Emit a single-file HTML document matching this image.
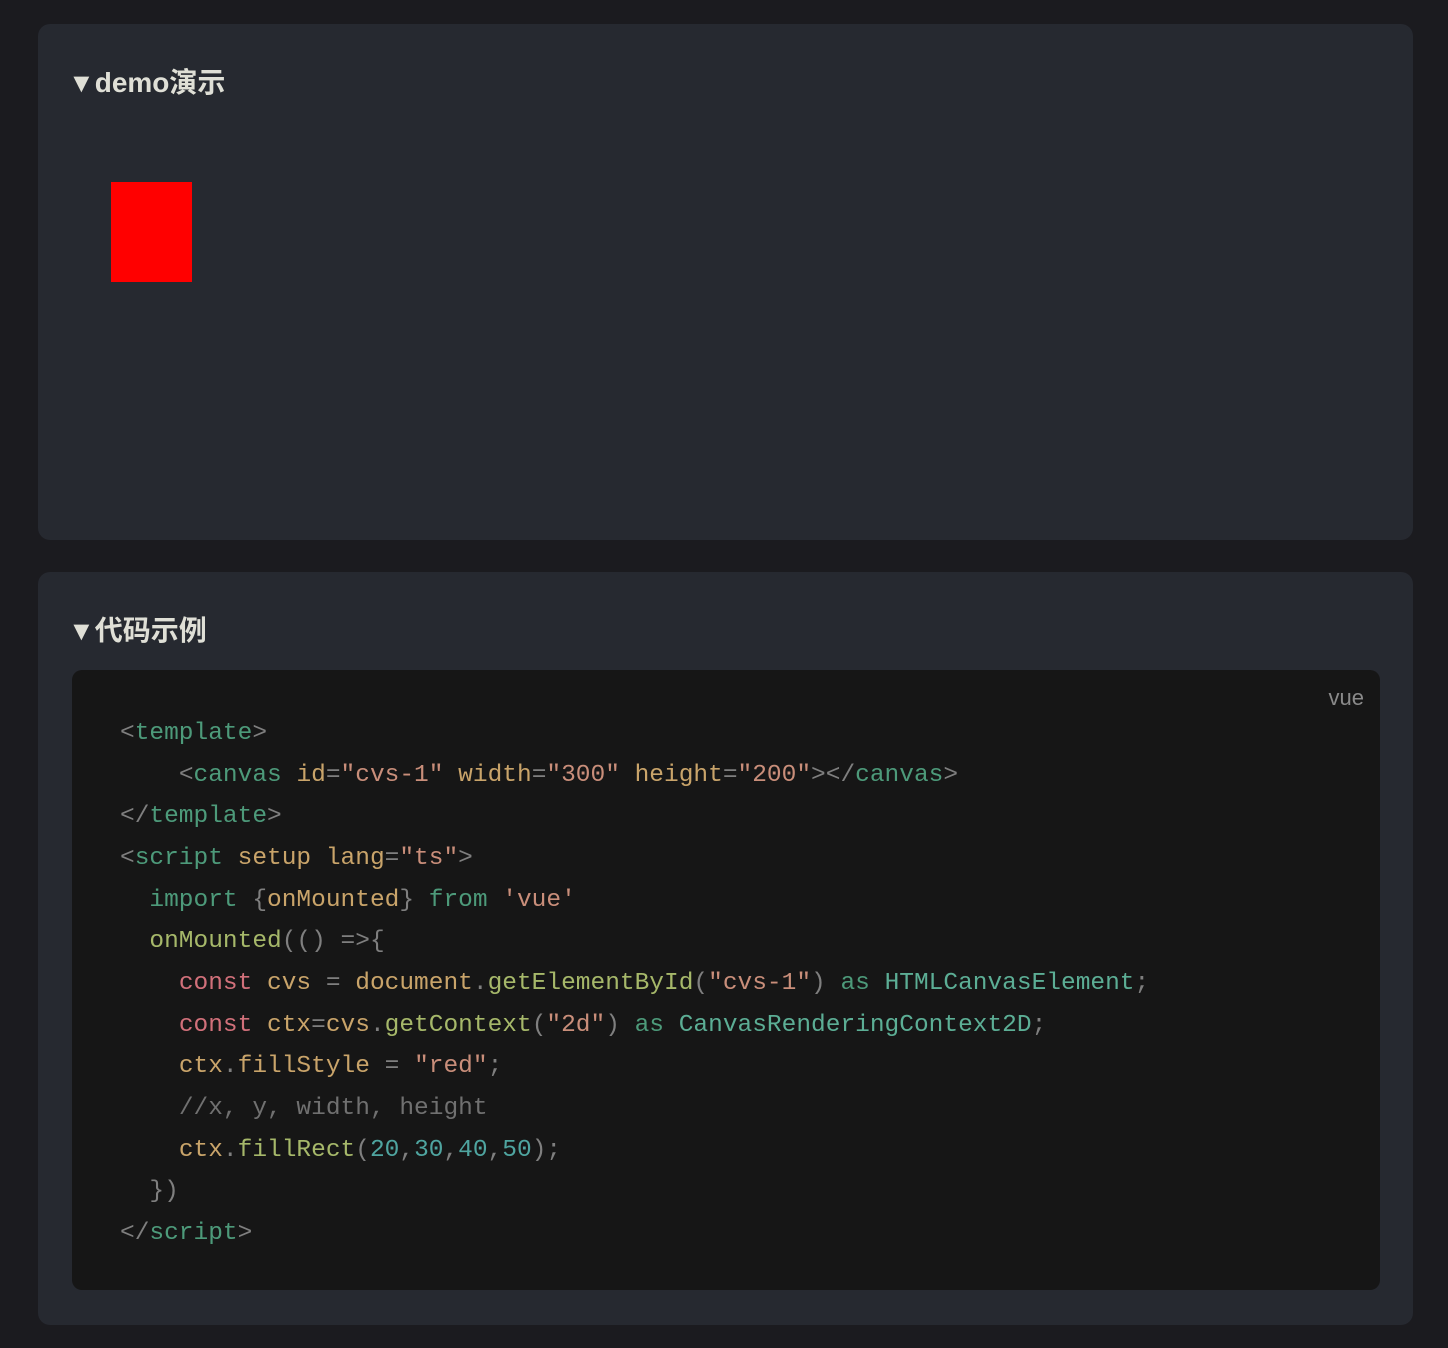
<!DOCTYPE html>
<html><head><meta charset="utf-8"><style>
body{margin:0;background:#1b1b1f;width:1448px;height:1348px;overflow:hidden;font-family:"Liberation Sans","Noto Sans CJK SC",sans-serif;}
.card{position:absolute;left:38px;width:1375px;background:#262930;border-radius:12px;}
.title{position:absolute;left:30px;color:#dfdfd6;font-size:28px;font-weight:bold;}
.code{position:absolute;left:34px;top:98px;width:1308px;height:620px;background:#161616;border-radius:10px;}
pre{margin:0;position:absolute;left:48px;top:43px;font-family:"Liberation Mono","DejaVu Sans Mono",monospace;font-size:24.5px;line-height:41.67px;color:#bdbdbd;}
.g{color:#7f7f7f}.t{color:#4d9a7a}.a{color:#c9a46a}.s{color:#c98e7a}.k{color:#4d9a7a}.f{color:#a6b86a}.c{color:#d1707a}.n{color:#4fa5a0}.cm{color:#707070}.ty{color:#5cae95}
</style></head><body>
<div class="card" style="top:24px;height:516px">
<div class="title" style="top:37px"><span style="font-size:27px">▼</span>demo演示</div>
<div style="position:absolute;left:73px;top:158px;width:81px;height:100px;background:#ff0000"></div>
</div>
<div class="card" style="top:572px;height:753px">
<div class="title" style="top:37px"><span style="font-size:27px">▼</span>代码示例</div>
<div class="code">
<div style="position:absolute;right:16px;top:15px;color:#8a8a8a;font-size:22px">vue</div>
<pre><span class="g">&lt;</span><span class="t">template</span><span class="g">&gt;</span>
    <span class="g">&lt;</span><span class="t">canvas</span> <span class="a">id</span><span class="g">=</span><span class="s">"cvs-1"</span> <span class="a">width</span><span class="g">=</span><span class="s">"300"</span> <span class="a">height</span><span class="g">=</span><span class="s">"200"</span><span class="g">&gt;&lt;/</span><span class="t">canvas</span><span class="g">&gt;</span>
<span class="g">&lt;/</span><span class="t">template</span><span class="g">&gt;</span>
<span class="g">&lt;</span><span class="t">script</span> <span class="a">setup</span> <span class="a">lang</span><span class="g">=</span><span class="s">"ts"</span><span class="g">&gt;</span>
  <span class="k">import</span> <span class="g">{</span><span class="a">onMounted</span><span class="g">}</span> <span class="k">from</span> <span class="s">'vue'</span>
  <span class="f">onMounted</span><span class="g">(() =&gt;{</span>
    <span class="c">const</span> <span class="a">cvs</span> <span class="g">=</span> <span class="a">document</span><span class="g">.</span><span class="f">getElementById</span><span class="g">(</span><span class="s">"cvs-1"</span><span class="g">)</span> <span class="k">as</span> <span class="ty">HTMLCanvasElement</span><span class="g">;</span>
    <span class="c">const</span> <span class="a">ctx</span><span class="g">=</span><span class="a">cvs</span><span class="g">.</span><span class="f">getContext</span><span class="g">(</span><span class="s">"2d"</span><span class="g">)</span> <span class="k">as</span> <span class="ty">CanvasRenderingContext2D</span><span class="g">;</span>
    <span class="a">ctx</span><span class="g">.</span><span class="a">fillStyle</span> <span class="g">=</span> <span class="s">"red"</span><span class="g">;</span>
    <span class="cm">//x, y, width, height</span>
    <span class="a">ctx</span><span class="g">.</span><span class="f">fillRect</span><span class="g">(</span><span class="n">20</span><span class="g">,</span><span class="n">30</span><span class="g">,</span><span class="n">40</span><span class="g">,</span><span class="n">50</span><span class="g">);</span>
  <span class="g">})</span>
<span class="g">&lt;/</span><span class="t">script</span><span class="g">&gt;</span></pre>
</div>
</div>
</body></html>
